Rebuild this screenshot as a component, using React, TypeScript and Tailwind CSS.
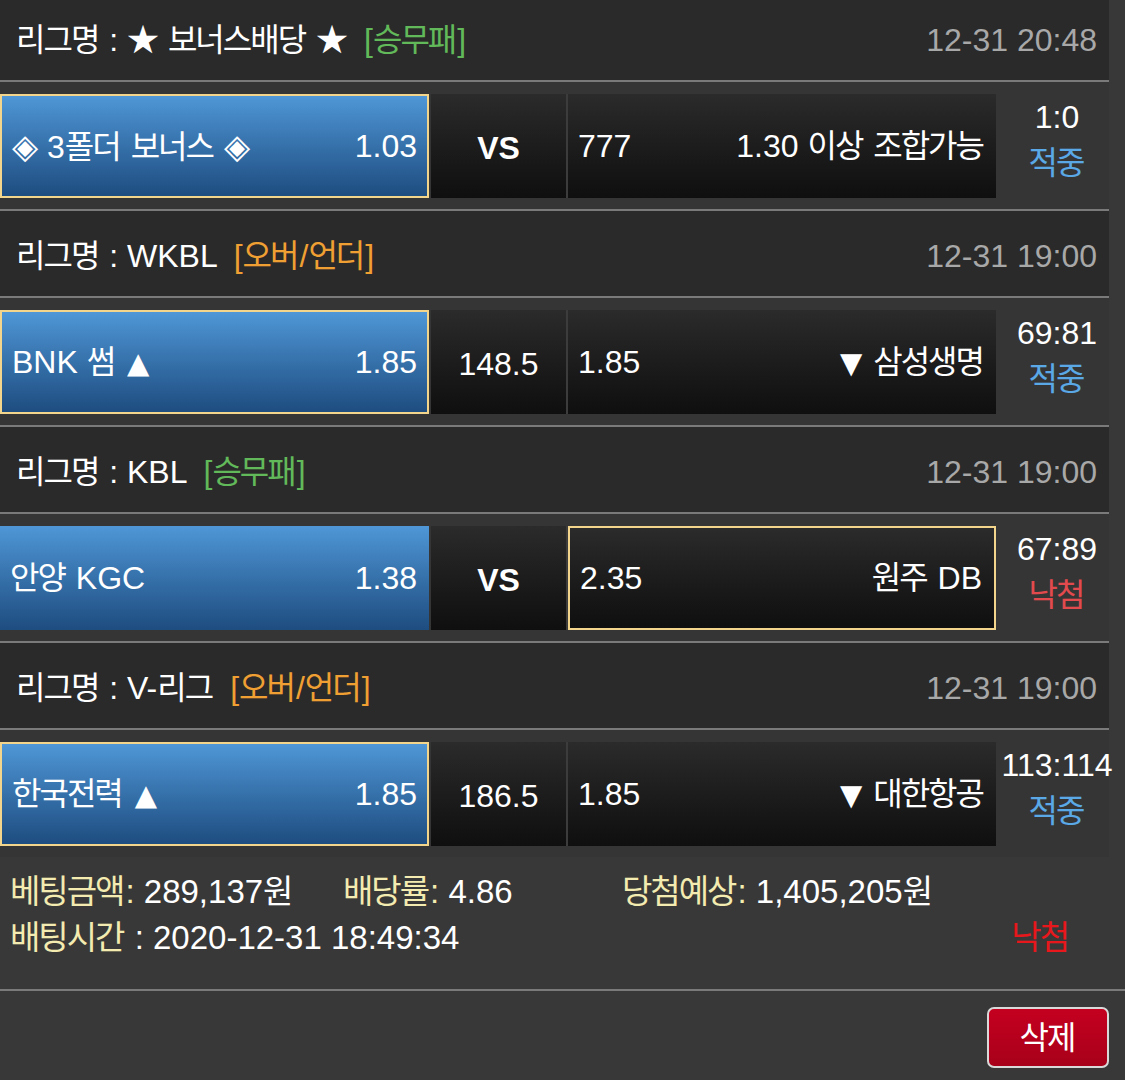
import React from "react";

type Match = {
  league: React.ReactNode;
  type: React.ReactNode;
  typeColor: string;
  time: string;
  home: React.ReactNode;
  homeOdds: string;
  mid: string;
  midBold: boolean;
  awayOdds: string;
  away: React.ReactNode;
  score: string;
  result: string;
  resultColor: string;
  pick: "home" | "away";
};

const K = ({ t }: { t: string }) => (
  <>
    <span className="tracking-[-2px]">{t.slice(0, -1)}</span>
    {t.slice(-1)}
  </>
);

const Tri = ({ c }: { c: string }) => (
  <span className="font-['DejaVu_Sans',sans-serif] text-[29px] px-[2px]">{c}</span>
);

const Dia = () => (
  <span className="font-['DejaVu_Sans',sans-serif] text-[34px]">◈</span>
);

const GREEN = "text-[#62b95a]";
const ORANGE = "text-[#f0a033]";
const BLUE = "text-[#5aa8e6]";

const wl = (
  <>
    [<K t="승무패" />]
  </>
);
const ou = (
  <>
    [<K t="오버" />/<K t="언더" />]
  </>
);

const matches: Match[] = [
  {
    league: (
      <>
        ★ <K t="보너스배당" /> ★
      </>
    ),
    type: wl,
    typeColor: GREEN,
    time: "12-31 20:48",
    home: (
      <>
        <Dia /> 3<K t="폴더" /> <K t="보너스" /> <Dia />
      </>
    ),
    homeOdds: "1.03",
    mid: "VS",
    midBold: true,
    awayOdds: "777",
    away: (
      <>
        1.30 <K t="이상" /> <K t="조합가능" />
      </>
    ),
    score: "1:0",
    result: "적중",
    resultColor: BLUE,
    pick: "home",
  },
  {
    league: "WKBL",
    type: ou,
    typeColor: ORANGE,
    time: "12-31 19:00",
    home: (
      <>
        BNK <K t="썸" /> <Tri c="▲" />
      </>
    ),
    homeOdds: "1.85",
    mid: "148.5",
    midBold: false,
    awayOdds: "1.85",
    away: (
      <>
        <Tri c="▼" /> <K t="삼성생명" />
      </>
    ),
    score: "69:81",
    result: "적중",
    resultColor: BLUE,
    pick: "home",
  },
  {
    league: "KBL",
    type: wl,
    typeColor: GREEN,
    time: "12-31 19:00",
    home: (
      <>
        <K t="안양" /> KGC
      </>
    ),
    homeOdds: "1.38",
    mid: "VS",
    midBold: true,
    awayOdds: "2.35",
    away: (
      <>
        <K t="원주" /> DB
      </>
    ),
    score: "67:89",
    result: "낙첨",
    resultColor: "text-[#e34a4e]",
    pick: "away",
  },
  {
    league: (
      <>
        V-<K t="리그" />
      </>
    ),
    type: ou,
    typeColor: ORANGE,
    time: "12-31 19:00",
    home: (
      <>
        <K t="한국전력" /> <Tri c="▲" />
      </>
    ),
    homeOdds: "1.85",
    mid: "186.5",
    midBold: false,
    awayOdds: "1.85",
    away: (
      <>
        <Tri c="▼" /> <K t="대한항공" />
      </>
    ),
    score: "113:114",
    result: "적중",
    resultColor: BLUE,
    pick: "home",
  },
];

function Sep() {
  return <div className="h-[2px] bg-[#7a7a7a]" />;
}

function Header({ m, first }: { m: Match; first: boolean }) {
  return (
    <div
      className={
        first
          ? "h-[80px] bg-[#2a2a2a] flex items-center justify-between pl-[16px] pr-[12px]"
          : "h-[85px] bg-[#2a2a2a] flex items-center justify-between pl-[16px] pr-[12px] pt-[5px]"
      }
    >
      <div className="text-white whitespace-nowrap">
        <K t="리그명" /> : {m.league}
        <span className={"ml-[16px] " + m.typeColor}>{m.type}</span>
      </div>
      <div className="text-[#a8a8a8] whitespace-nowrap">{m.time}</div>
    </div>
  );
}

function Row({ m }: { m: Match }) {
  const homeSel = m.pick === "home";
  const awaySel = m.pick === "away";
  return (
    <div className="h-[127px] bg-[#353535] flex items-start pt-[12px]">
      <div
        className={
          homeSel
            ? "shrink-0 w-[429px] h-[104px] flex items-center justify-between px-[10px] bg-gradient-to-b from-[#4f97d7] to-[#1e4d80] border-2 border-[#f3d68c] text-white whitespace-nowrap"
            : "shrink-0 w-[429px] h-[104px] flex items-center justify-between pl-[10px] pr-[12px] bg-gradient-to-b from-[#4f97d7] to-[#1e4d80] text-white whitespace-nowrap"
        }
      >
        <span>{m.home}</span>
        <span>{m.homeOdds}</span>
      </div>
      <div className="shrink-0 ml-[2px] w-[135px] h-[104px] flex items-center justify-center bg-gradient-to-b from-[#2b2b2b] to-[#0f0f0f] text-white">
        <span className={m.midBold ? "font-bold pt-[4px]" : "pt-[4px]"}>{m.mid}</span>
      </div>
      <div className="shrink-0 w-[2px] h-[104px] bg-[#3c3c3c]" />
      <div
        className={
          awaySel
            ? "shrink-0 w-[428px] h-[104px] flex items-center justify-between pl-[10px] pr-[12px] bg-gradient-to-b from-[#2b2b2b] to-[#0f0f0f] border-2 border-[#f3d68c] text-white whitespace-nowrap"
            : "shrink-0 w-[428px] h-[104px] flex items-center justify-between pl-[10px] pr-[11px] bg-gradient-to-b from-[#2b2b2b] to-[#0f0f0f] text-white whitespace-nowrap"
        }
      >
        <span>{m.awayOdds}</span>
        <span>{m.away}</span>
      </div>
      <div className="w-[113px] shrink-0 pl-[9px] flex flex-col items-center leading-[46px] whitespace-nowrap">
        <span className="text-white">{m.score}</span>
        <span className={m.resultColor}>
          <K t={m.result} />
        </span>
      </div>
    </div>
  );
}

export default function App() {
  return (
    <div className="w-[1125px] h-[1080px] overflow-hidden bg-[#383838] font-['Liberation_Sans','Noto_Sans_CJK_KR',sans-serif] text-[32px] leading-none">
      <div className="w-[1109px]">
        {matches.map((m, i) => (
          <div key={i}>
            {i > 0 && <Sep />}
            <Header m={m} first={i === 0} />
            <Sep />
            <Row m={m} />
          </div>
        ))}
      </div>
      <div className="pt-[12px] pb-[28px] leading-[46px] text-[33px] whitespace-nowrap">
        <div className="flex pl-[10px]">
          <div className="w-[333px]">
            <span className="text-[#f3ebb0]">
              <K t="베팅금액" />:
            </span>
            <span className="text-white">
              {" "}289,137<K t="원" />
            </span>
          </div>
          <div className="w-[279px]">
            <span className="text-[#f3ebb0]">
              <K t="배당률" />:
            </span>
            <span className="text-white"> 4.86</span>
          </div>
          <div>
            <span className="text-[#f3ebb0]">
              <K t="당첨예상" />:
            </span>
            <span className="text-white">
              {" "}1,405,205<K t="원" />
            </span>
          </div>
        </div>
        <div className="flex justify-between pl-[10px] pr-[55px]">
          <div>
            <span className="text-[#f3ebb0]">
              <K t="배팅시간" />
            </span>
            <span className="text-white"> : 2020-12-31 18:49:34</span>
          </div>
          <span className="text-[#e8171c]">
            <K t="낙첨" />
          </span>
        </div>
      </div>
      <div className="h-[2px] bg-[#7a7a7a]" />
      <div className="w-[1109px] flex justify-end pt-[16px]">
        <button className="w-[122px] h-[61px] rounded-[7px] border-2 border-[#d9d9d9] bg-gradient-to-b from-[#c4001f] to-[#a8001a] text-white flex items-center justify-center">
          <K t="삭제" />
        </button>
      </div>
    </div>
  );
}
